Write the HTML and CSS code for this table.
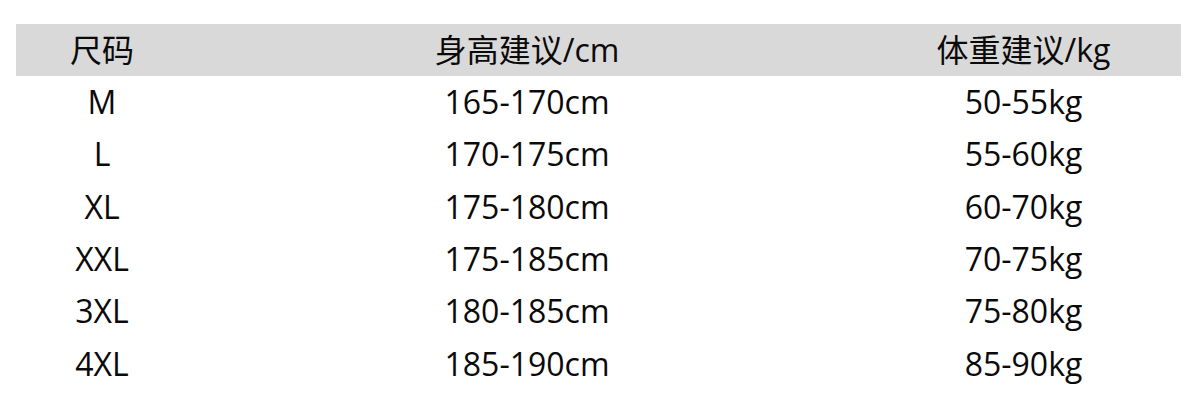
FILE: index.html
```html
<!DOCTYPE html>
<html lang="zh-CN">
<head>
<meta charset="utf-8">
<title>尺码表</title>
<link rel="stylesheet" href="styles.css">
</head>
<body>
<div class="size-table">
  <div class="row head">
    <div class="cell">尺码</div>
    <div class="cell">身高建议/cm</div>
    <div class="cell">体重建议/kg</div>
  </div>
  <div class="row"><div class="cell">M</div><div class="cell">165-170cm</div><div class="cell">50-55kg</div></div>
  <div class="row"><div class="cell">L</div><div class="cell">170-175cm</div><div class="cell">55-60kg</div></div>
  <div class="row"><div class="cell">XL</div><div class="cell">175-180cm</div><div class="cell">60-70kg</div></div>
  <div class="row"><div class="cell">XXL</div><div class="cell">175-185cm</div><div class="cell">70-75kg</div></div>
  <div class="row"><div class="cell">3XL</div><div class="cell">180-185cm</div><div class="cell">75-80kg</div></div>
  <div class="row"><div class="cell">4XL</div><div class="cell">185-190cm</div><div class="cell">85-90kg</div></div>
</div>
</body>
</html>
```
FILE: styles.css
```css
html, body {
  margin: 0;
  padding: 0;
  background: #ffffff;
}
body {
  font-family: "Open Sans", "Noto Sans CJK SC", sans-serif;
  color: #0a0a0a;
}
.size-table {
  padding: 24px 16px 0 16px;
}
.row {
  display: grid;
  grid-template-columns: 172px 678px 1fr;
  height: 52.3px;
  align-items: center;
}
.row.head {
  height: 52px;
  background: #d9d9d9;
}
.cell {
  font-size: 32px;
  line-height: 52px;
  text-align: center;
  white-space: nowrap;
}
```
